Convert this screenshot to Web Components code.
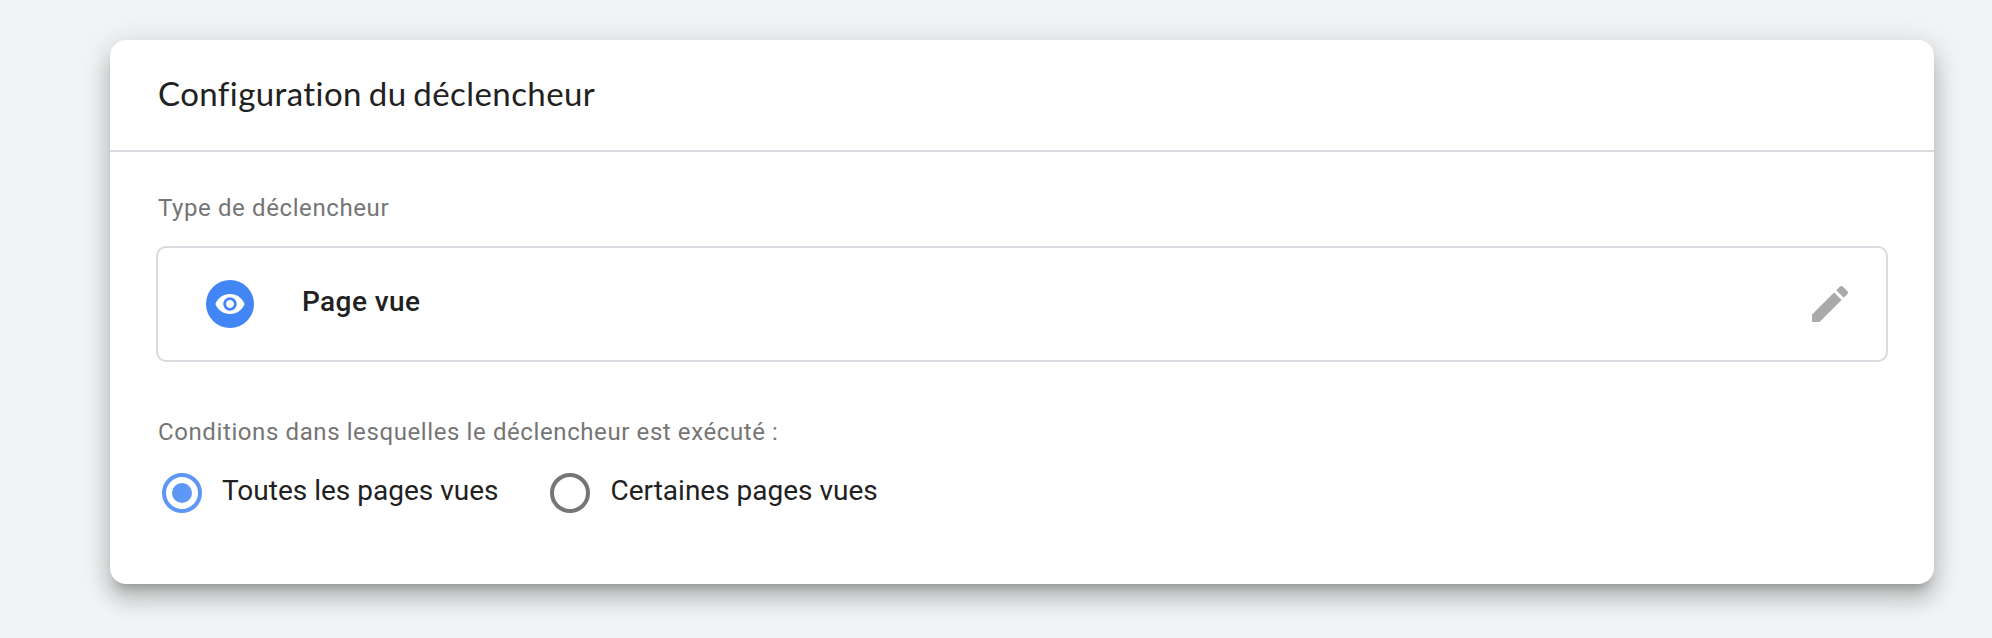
<!DOCTYPE html>
<html lang="fr">
<head>
    <meta charset="UTF-8">
    <meta name="viewport" content="width=device-width, initial-scale=1.0">
    <title>Configuration du déclencheur</title>
    <style>
        body {
            margin: 0;
            min-height: 638px;
            box-sizing: border-box;
            padding: 40px 58px 54px 110px;
            background: #f1f3f4;
            color: #212121;
            font-family: Roboto, "Liberation Sans", sans-serif;
        }
    </style>
</head>
<body>

<trigger-card>
    <span slot="title">Configuration du déclencheur</span>
    <field-label>Type de déclencheur</field-label>
    <trigger-type>Page vue</trigger-type>
    <field-label class="conditions">Conditions dans lesquelles le déclencheur est exécuté :</field-label>
    <radio-group>
        <radio-option checked>Toutes les pages vues</radio-option>
        <radio-option>Certaines pages vues</radio-option>
    </radio-group>
</trigger-card>

<template id="card-template">
    <style>
        :host {
            display: block;
            box-sizing: border-box;
            height: 544px;
            border-radius: 16px;
            background: #fff;
            box-shadow: 0 10px 10px -6px rgba(0, 0, 0, .2), 0 16px 20px 2px rgba(0, 0, 0, .14), 0 6px 28px 4px rgba(0, 0, 0, .12);
        }
        header {
            box-sizing: border-box;
            height: 112px;
            padding: 33px 48px 0;
            border-bottom: 2px solid #dadae0;
            font: 33px/40px Lato, Roboto, sans-serif;
            letter-spacing: 0.42px;
            word-spacing: -2px;
        }
        main {
            padding: 40px 46px 0;
        }
        ::slotted(.conditions) {
            margin-top: 54px;
        }
    </style>
    <header><slot name="title"></slot></header>
    <main><slot></slot></main>
</template>

<template id="label-template">
    <style>
        :host {
            display: block;
            padding-left: 2px;
            color: #757575;
            font-size: 24px;
            line-height: 32px;
            letter-spacing: 0.6px;
        }
    </style>
    <slot></slot>
</template>

<template id="type-template">
    <style>
        :host {
            display: flex;
            align-items: center;
            box-sizing: border-box;
            height: 116px;
            margin-top: 22px;
            padding: 0 32px 0 48px;
            border: 2px solid #dadae0;
            border-radius: 10px;
            font-size: 28px;
            font-weight: 500;
            line-height: 36px;
            letter-spacing: 0.4px;
        }
        .eye {
            width: 48px;
            height: 48px;
            margin-right: 48px;
        }
        .name {
            flex: 1;
            padding-bottom: 4px;
        }
        .pencil {
            width: 48px;
            height: 48px;
        }
    </style>
    <svg class="eye" viewBox="0 0 48 48">
        <circle cx="24" cy="24" r="24" fill="#4285f4"/>
        <path fill="#fff" transform="translate(8 8) scale(1.3333)" d="M12 4.5C7 4.5 2.73 7.61 1 12c1.73 4.39 6 7.5 11 7.5s9.27-3.11 11-7.5c-1.73-4.39-6-7.5-11-7.5zM12 17c-2.76 0-5-2.24-5-5s2.24-5 5-5 5 2.24 5 5-2.24 5-5 5zm0-8c-1.66 0-3 1.34-3 3s1.34 3 3 3 3-1.34 3-3-1.34-3-3-3z"/>
    </svg>
    <span class="name"><slot></slot></span>
    <svg class="pencil" viewBox="0 0 24 24">
        <path fill="#aaa" d="M3 17.25V21h3.75L17.81 9.94l-3.75-3.75L3 17.25zM20.71 7.04c.39-.39.39-1.02 0-1.41l-2.34-2.34c-.39-.39-1.02-.39-1.41 0l-1.83 1.83 3.75 3.75 1.83-1.83z"/>
    </svg>
</template>

<template id="group-template">
    <style>
        :host {
            display: flex;
            gap: 52px;
            margin-top: 25px;
            padding-left: 6px;
        }
    </style>
    <slot></slot>
</template>

<template id="radio-template">
    <style>
        :host {
            display: flex;
            align-items: center;
            gap: 20px;
            height: 40px;
            font-size: 28px;
            line-height: 36px;
        }
        .ring {
            display: grid;
            place-items: center;
            box-sizing: border-box;
            width: 40px;
            height: 40px;
            border: 4px solid #757575;
            border-radius: 50%;
        }
        :host([checked]) .ring {
            border-color: #5e97f6;
        }
        :host([checked]) .ring::after {
            content: "";
            width: 20px;
            height: 20px;
            border-radius: 50%;
            background: #5e97f6;
        }
        .text {
            padding-bottom: 4px;
        }
    </style>
    <span class="ring"></span>
    <span class="text"><slot></slot></span>
</template>

<script>

    class TemplateElement extends HTMLElement {

        constructor(templateId) {
            super();

            this.attachShadow({mode: "open"});

            let template = document.querySelector(templateId);

            this.shadowRoot.appendChild(template.content.cloneNode(true));
        }
    }

    class TriggerCard extends TemplateElement {
        constructor() {
            super('#card-template');
        }
    }

    class FieldLabel extends TemplateElement {
        constructor() {
            super('#label-template');
        }
    }

    class TriggerType extends TemplateElement {
        constructor() {
            super('#type-template');
        }
    }

    class RadioGroup extends TemplateElement {
        constructor() {
            super('#group-template');
        }
    }

    class RadioOption extends TemplateElement {
        constructor() {
            super('#radio-template');
        }
    }

    window.customElements.define('trigger-card', TriggerCard);
    window.customElements.define('field-label', FieldLabel);
    window.customElements.define('trigger-type', TriggerType);
    window.customElements.define('radio-group', RadioGroup);
    window.customElements.define('radio-option', RadioOption);

</script>
</body>
</html>
